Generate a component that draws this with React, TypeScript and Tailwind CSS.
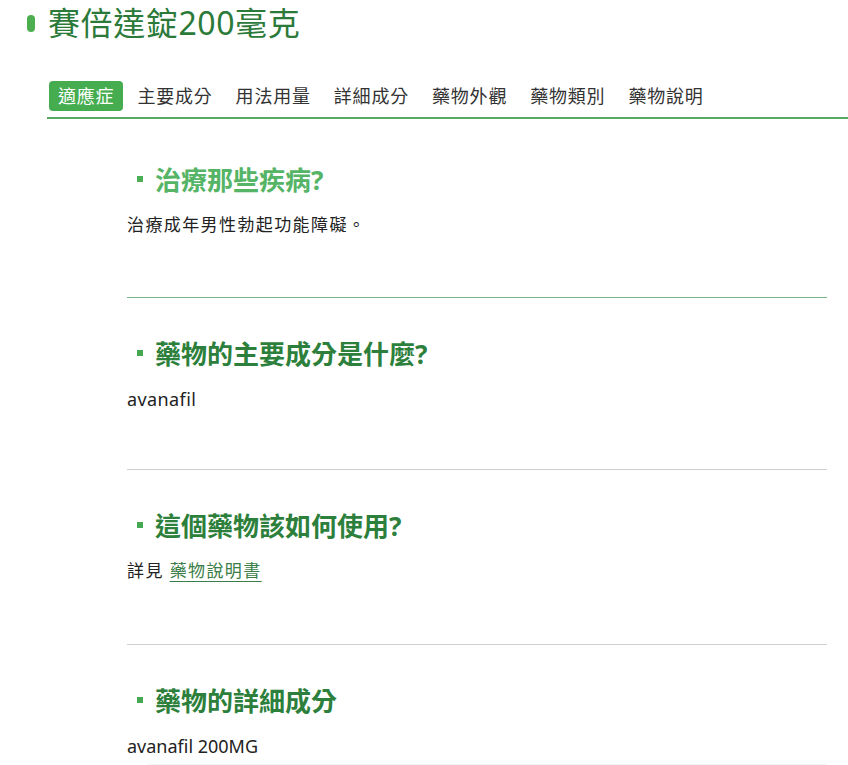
const tabs = ["適應症", "主要成分", "用法用量", "詳細成分", "藥物外觀", "藥物類別", "藥物說明"];

function Heading({ text, light }: { text: string; light?: boolean }) {
  return (
    <h2
      className={`flex h-[36px] items-center gap-[12px] pl-[10px] text-[26px] font-bold leading-[36px] ${
        light ? "text-[#55b466]" : "text-[#2d7f3c]"
      }`}
    >
      <span className={`mb-[3px] block h-[6px] w-[6px] ${light ? "bg-[#4cae55]" : "bg-[#47a852]"}`} />
      {text}
    </h2>
  );
}

export default function App() {
  return (
    <div
      className="min-h-screen w-[848px] overflow-hidden bg-white text-[#222]"
      style={{ fontFamily: '"Noto Sans", "Noto Sans CJK TC", sans-serif' }}
    >
      {/* page title */}
      <div className="flex items-center gap-[13px] pl-[27px] pt-[7px]">
        <span className="block h-[17px] w-[8px] rounded-full bg-[#4cae4f]" />
        <h1 className="text-[32px] leading-[32px] tracking-[0.6px] text-[#2b7a39]">賽倍達錠200毫克</h1>
      </div>

      {/* tab strip */}
      <div className="ml-[47px] mt-[42px] border-b-2 border-[#5aa866] pb-[6px]">
        <div className="flex h-[30px] gap-[5px] pl-[2px]">
          {tabs.map((t, i) => (
            <button
              key={t}
              type="button"
              className={`rounded-[4px] px-[9px] text-[18px] leading-[30px] tracking-[0.8px] ${
                i === 0 ? "bg-[#45ad4f] text-white" : "text-[#333]"
              }`}
            >
              {t}
            </button>
          ))}
        </div>
      </div>

      <div className="ml-[127px] w-[700px]">
        <section className="border-b border-[#79b384] pb-[58px] pt-[43px]">
          <Heading text="治療那些疾病?" light />
          <p className="mt-[13px] text-[17px] leading-[28px] tracking-[1.4px]">治療成年男性勃起功能障礙。</p>
        </section>

        <section className="border-b border-[#cfcfcf] pb-[56px] pt-[38px]">
          <Heading text="藥物的主要成分是什麼?" />
          <p className="mt-[13px] text-[18px] leading-[28px] tracking-[0.4px]">avanafil</p>
        </section>

        <section className="border-b border-[#cfcfcf] pb-[59px] pt-[38px]">
          <Heading text="這個藥物該如何使用?" />
          <p className="mt-[13px] text-[17px] leading-[28px] tracking-[1.4px]">
            詳見{" "}
            <a href="#" className="text-[#3a7d48] underline underline-offset-4">
              藥物說明書
            </a>
          </p>
        </section>

        <section className="pt-[38px]">
          <Heading text="藥物的詳細成分" />
          <p className="mt-[13px] text-[18px] leading-[28px]">avanafil 200MG</p>
          <div className="ml-[20px] mt-[4px] h-[30px] bg-[#f3f3f3]" />
        </section>
      </div>
    </div>
  );
}
